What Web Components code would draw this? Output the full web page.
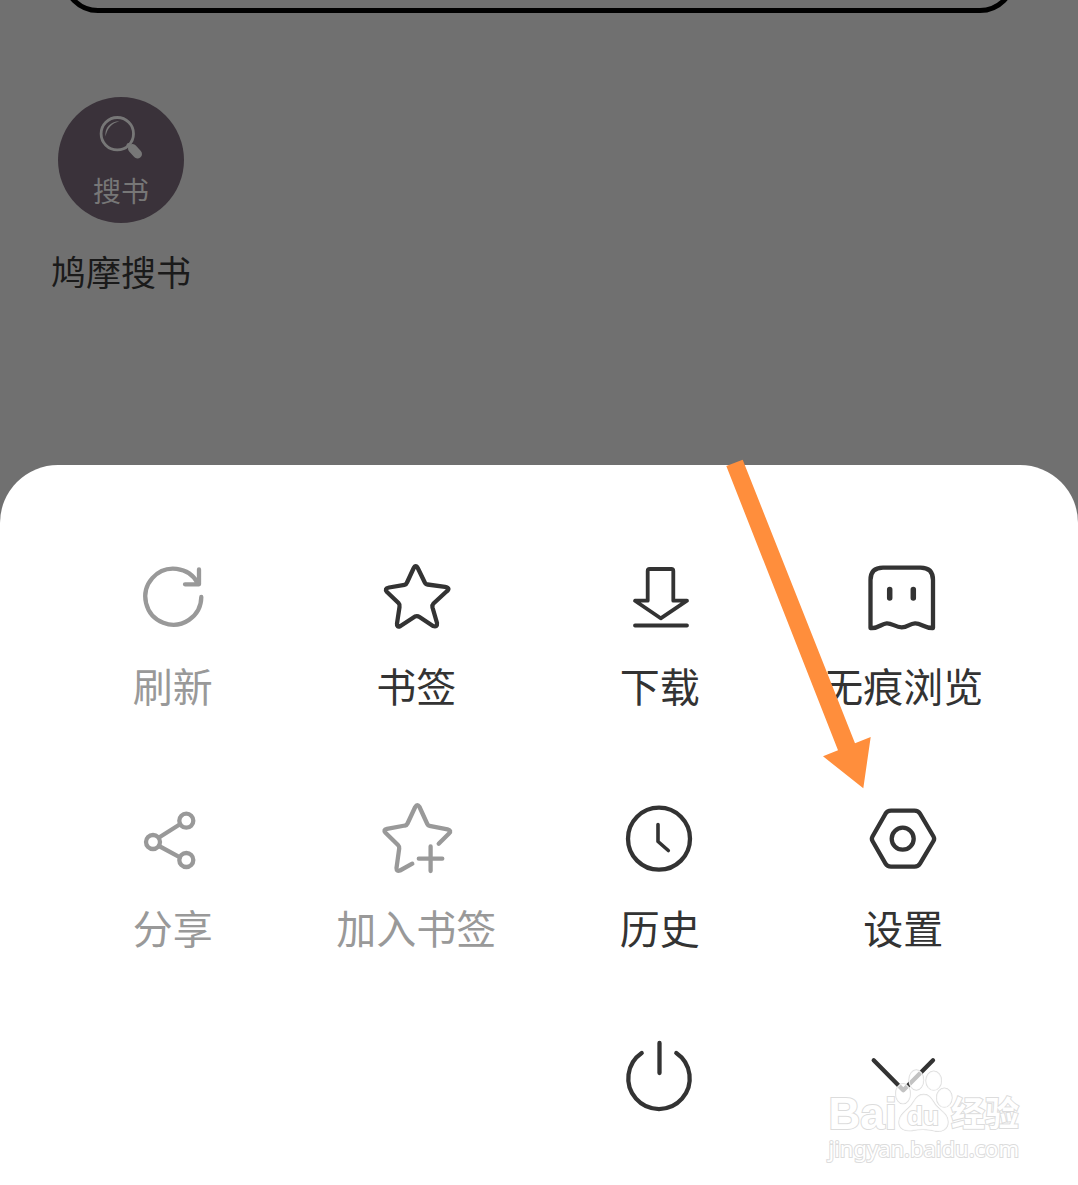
<!DOCTYPE html>
<html lang="zh-CN">
<head>
<meta charset="UTF-8">
<meta name="viewport" content="width=device-width, initial-scale=1">
<title>菜单</title>
<style>
    body{
        margin: 0;
        background: #707070;
        font-family: "Noto Sans CJK SC", sans-serif;
    }
</style>
</head>
<body>
<browser-page>
    <search-box slot="top"></search-box>
    <app-shortcut name="鸠摩搜书" badge="搜书"></app-shortcut>
    <menu-sheet slot="sheet">
        <menu-item icon="refresh" off>刷新</menu-item>
        <menu-item icon="star">书签</menu-item>
        <menu-item icon="download">下载</menu-item>
        <menu-item icon="ghost">无痕浏览</menu-item>
        <menu-item icon="share" off>分享</menu-item>
        <menu-item icon="addstar" off>加入书签</menu-item>
        <menu-item icon="clock">历史</menu-item>
        <menu-item icon="settings">设置</menu-item>
        <menu-item icon="power" hint="退出" class="third"></menu-item>
        <menu-item icon="chevron" hint="收起"></menu-item>
        <pointer-arrow slot="over"></pointer-arrow>
        <water-mark slot="over"></water-mark>
    </menu-sheet>
</browser-page>

<script>
const icons = {
    refresh: `<path d="M68.3 40A28 28 0 1 1 65 26.5M66 12.5V27.3H52"/>`,
    star: `<path d="M37.5 11.5Q39.7 7 42 11.5L48.800 25.500Q49.500 27.300 51.500 27.500L69 29.800Q75 31 70.500 34.500L57.500 46.500Q56 48 56.500 50.500L61 66Q61.500 70.500 57 69L43.500 60Q41.300 58.500 39 59.500L24.500 69Q20.500 71 21 66.500L23.500 50Q24 47.500 22.500 46L11 35Q8 31.500 13 30.500L28.500 27.800Q30.300 27.500 31 25.500Z"/>`,
    download: `<path d="M27.7 43.700V14q0-2 2-2H51.300q2 0 2 2V43.700H67L40.700 61.300 15 43.700ZM15 68.500H67" stroke-width="3.800"/>`,
    ghost: `<path d="M7.500 71V23Q7.500 10.700 20 10.700H57.500Q70 10.700 70 23V71C62 71.500 58 66 52 66.300S45 70.300 38.700 70.300 29 66 23.700 66.300 15 72 7.500 71Z"/><path d="M26.700 32.500V41M50.300 32.500V41" stroke-width="5.500"/>`,
    share: `<circle cx="53.300" cy="21.700" r="7"/><circle cx="20" cy="43" r="7"/><circle cx="53.300" cy="61" r="7"/><path d="M26 38.500L47 25.300M26 47L47 58.300"/>`,
    addstar: `<path d="M62.700 44.700L73 34.500Q76 31.500 71.500 30.300L53.500 26.800Q52 26.500 51.300 25L43.500 8Q41.300 4.500 39.200 8L31.500 24.500Q30.700 26.300 29 26.500L11 29.800Q6.800 30.800 9.500 33.800L22 46Q23.500 47.500 23.200 49.500L20.500 69Q20.500 72.800 24 71.500L36.300 64.700M42.800 59.700H66.300M54.600 47.500V72"/>`,
    clock: `<circle cx="39" cy="39.700" r="31"/><path d="M38 25.500V42.500L48.300 51.500" stroke-width="3.600"/>`,
    settings: `<path d="M9.500 37.500L22.500 14.700Q24.300 11.700 28 11.700H51.500Q55.200 11.700 57 14.700L70.500 37.500Q71.800 39.700 70.500 42L57 64.700Q55.200 67.700 51.500 67.700H28Q24.300 67.700 22.500 64.700L9.500 42Q8.200 39.700 9.500 37.500Z"/><circle cx="39.700" cy="39.700" r="11"/>`,
    power: `<path d="M21.700 12A30.700 30.700 0 1 0 56.300 12M39.500 2V32"/>`,
    chevron: `<path d="M10.700 19.300L40.300 49.300 70 19.300"/>`
};

class BrowserPage extends HTMLElement{
    constructor(){
        super();
        this.attachShadow({mode: "open"});
        this.shadowRoot.innerHTML = `
            <style>
                :host{
                    display: flex;
                    flex-direction: column;
                    min-height: 100vh;
                    overflow: hidden;
                }
                main{
                    flex: 1;
                    padding: 84px 51px;
                }
            </style>
            <slot name="top"></slot>
            <main><slot></slot></main>
            <slot name="sheet"></slot>
        `;
    }
}

// only the lower edge of the search box stays on screen
class SearchBox extends HTMLElement{
    constructor(){
        super();
        this.attachShadow({mode: "open"});
        this.shadowRoot.innerHTML = `
            <style>
                :host{
                    display: flex;
                    align-items: flex-end;
                    height: 13px;
                    padding: 0 62px;
                    overflow: hidden;
                }
                input{
                    flex: 1;
                    box-sizing: border-box;
                    height: 72px;
                    padding: 0 32px;
                    border: 5px solid #000;
                    border-radius: 36px;
                    background: none;
                    font: inherit;
                }
            </style>
            <input type="search" aria-label="搜索">
        `;
    }
}

class AppShortcut extends HTMLElement{
    constructor(){
        super();
        this.attachShadow({mode: "open"});
    }

    connectedCallback(){
        this.shadowRoot.innerHTML = `
            <style>
                :host{
                    display: flex;
                }
                a{
                    display: flex;
                    flex-direction: column;
                    align-items: center;
                    gap: 24px;
                    color: #1a1a1a;
                    font-size: 35px;
                    line-height: 48px;
                    text-decoration: none;
                }
                .badge{
                    box-sizing: border-box;
                    display: flex;
                    flex-direction: column;
                    align-items: center;
                    gap: 12px;
                    width: 126px;
                    height: 126px;
                    padding-top: 17px;
                    border-radius: 50%;
                    background: #3a323a;
                    color: #777;
                    font-size: 28px;
                    line-height: 32px;
                }
                svg{
                    display: block;
                    width: 48px;
                    height: 48px;
                }
            </style>
            <a href="#">
                <span class="badge">
                    <svg viewBox="0 0 48 48" fill="none" stroke="currentColor" stroke-linecap="round" aria-hidden="true">
                        <circle cx="20.300" cy="19.700" r="16.200" stroke-width="2.800"/>
                        <path d="M8.500 22.500C7.500 14 13 7.500 22.500 7.300C14.500 9.500 10.500 14 8.500 22.500Z" fill="currentColor" stroke="none"/>
                        <path d="M31.500 31L36 35" stroke-width="4"/>
                        <path d="M35.500 34.500L40.500 40" stroke-width="9"/>
                    </svg>
                    ${this.getAttribute("badge")}
                </span>
                <span>${this.getAttribute("name")}</span>
            </a>
        `;
    }
}

class MenuSheet extends HTMLElement{
    constructor(){
        super();
        this.attachShadow({mode: "open"});
        this.shadowRoot.innerHTML = `
            <style>
                :host{
                    display: block;
                    position: relative;
                    border-radius: 58px 58px 0 0;
                    background: #fff;
                }
                nav{
                    display: grid;
                    grid-template-columns: repeat(4, 1fr);
                    row-gap: 90px;
                    padding: 92px 53px 64px 51px;
                }
                ::slotted(.third){
                    grid-column-start: 3;
                }
            </style>
            <nav><slot></slot></nav>
            <slot name="over"></slot>
        `;
    }
}

class MenuItem extends HTMLElement{
    constructor(){
        super();
        this.attachShadow({mode: "open"});
    }

    connectedCallback(){
        const hint = this.getAttribute("hint");
        this.shadowRoot.innerHTML = `
            <style>
                :host{
                    display: flex;
                    justify-content: center;
                }
                button{
                    display: flex;
                    flex-direction: column;
                    align-items: center;
                    gap: 24px;
                    padding: 0;
                    border: 0;
                    background: none;
                    color: #333;
                    font: inherit;
                    font-size: 40px;
                    line-height: 48px;
                    white-space: nowrap;
                    cursor: pointer;
                }
                button:disabled{
                    color: #999;
                    cursor: default;
                }
                svg{
                    display: block;
                    width: 80px;
                    height: 80px;
                    overflow: visible;
                }
            </style>
            <button type="button" ${hint ? `aria-label="${hint}"` : ""} ${this.hasAttribute("off") ? "disabled" : ""}>
                <svg viewBox="0 0 80 80" fill="none" stroke="currentColor" stroke-width="4.300" stroke-linecap="round" stroke-linejoin="round" aria-hidden="true">${icons[this.getAttribute("icon")]}</svg>
                ${hint ? "" : "<span><slot></slot></span>"}
            </button>
        `;
    }
}

class PointerArrow extends HTMLElement{
    constructor(){
        super();
        this.attachShadow({mode: "open"});
        this.shadowRoot.innerHTML = `
            <style>
                :host{
                    position: absolute;
                    top: -6px;
                    right: 207px;
                    pointer-events: none;
                }
                svg{
                    display: block;
                    width: 148px;
                    height: 330px;
                }
            </style>
            <svg viewBox="0 0 148 330" aria-hidden="true">
                <path d="M3.300 7L19.700 0.700 132 284.300 147.700 278 140.300 329.300 100 297.300 115 291.300Z" fill="#ff8e3c"/>
            </svg>
        `;
    }
}

class WaterMark extends HTMLElement{
    constructor(){
        super();
        this.attachShadow({mode: "open"});
        this.shadowRoot.innerHTML = `
            <style>
                :host{
                    position: absolute;
                    right: 59px;
                    bottom: 23px;
                    color: #fff;
                    font-family: "Liberation Sans", "Noto Sans CJK SC", sans-serif;
                    -webkit-text-stroke: 2px #dcdcdc;
                    paint-order: stroke fill;
                    pointer-events: none;
                }
                .brand{
                    display: flex;
                    align-items: flex-end;
                    font-weight: bold;
                    line-height: 40px;
                }
                .bai{
                    font-size: 44px;
                }
                .jingyan{
                    font-size: 34px;
                }
                .site{
                    font-family: "Noto Sans", sans-serif;
                    font-size: 22px;
                    line-height: 28px;
                    text-align: center;
                }
                svg{
                    display: block;
                    width: 54px;
                    height: 66px;
                    overflow: visible;
                }
            </style>
            <div class="brand">
                <span class="bai">Bai</span>
                <svg viewBox="5 0 54 66">
                    <g fill="#fff" fill-opacity=".7" stroke="#dcdcdc" stroke-width="1.300">
                        <ellipse cx="24.300" cy="12" rx="7.300" ry="10"/>
                        <ellipse cx="41.700" cy="12.700" rx="7.700" ry="9.500"/>
                        <ellipse cx="11" cy="25.700" rx="7.300" ry="10"/>
                        <ellipse cx="52.300" cy="29.700" rx="7.700" ry="9.500"/>
                        <path d="M31.700 26.500C25 26.500 23 32 19 37.500C14 43 7 47 7 54C7 61 13 63.500 20 62.500C28 61 36 61 43 63C50 64.500 56 61 56 54C56 46 49 43 44 37.500C40 32 38 26.500 31.700 26.500Z"/>
                    </g>
                    <text x="31" y="57" text-anchor="middle" font-size="26" fill="#fff" stroke="#dcdcdc" stroke-width="2">du</text>
                </svg>
                <span class="jingyan">经验</span>
            </div>
            <div class="site">jingyan.baidu.com</div>
        `;
    }
}

customElements.define("browser-page", BrowserPage);
customElements.define("search-box", SearchBox);
customElements.define("app-shortcut", AppShortcut);
customElements.define("menu-sheet", MenuSheet);
customElements.define("menu-item", MenuItem);
customElements.define("pointer-arrow", PointerArrow);
customElements.define("water-mark", WaterMark);
</script>
</body>
</html>
